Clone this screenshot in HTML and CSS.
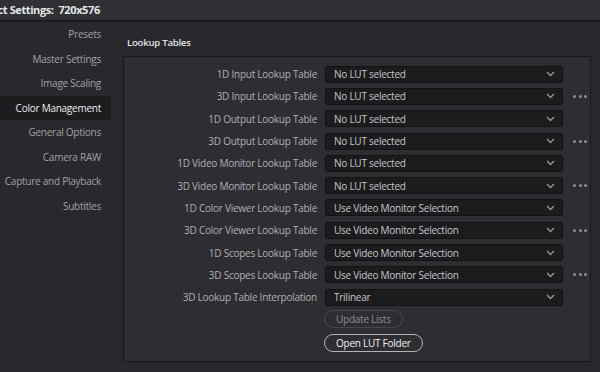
FILE: index.html
```html
<!DOCTYPE html>
<html lang="en">
<head>
  <meta charset="UTF-8">
  <title>Project Settings</title>
  <link rel="stylesheet" href="styles.css">
</head>
<body>
  <div class="titlebar"><span class="title">Project Settings:&nbsp; 720x576</span></div>

  <div class="layout">
    <ul class="sidebar">
      <li>Presets</li>
      <li>Master Settings</li>
      <li>Image Scaling</li>
      <li class="active">Color Management</li>
      <li>General Options</li>
      <li>Camera RAW</li>
      <li>Capture and Playback</li>
      <li>Subtitles</li>
    </ul>

    <div class="main">
      <h2>Lookup Tables</h2>
      <div class="panel">
        <div class="grid" id="lutGrid"></div>
        <div class="buttons">
          <button class="pill disabled">Update Lists</button>
          <button class="pill">Open LUT Folder</button>
        </div>
      </div>
    </div>
  </div>

  <script>
    const rows = [
      ["1D Input Lookup Table", "No LUT selected", false],
      ["3D Input Lookup Table", "No LUT selected", true],
      ["1D Output Lookup Table", "No LUT selected", false],
      ["3D Output Lookup Table", "No LUT selected", true],
      ["1D Video Monitor Lookup Table", "No LUT selected", false],
      ["3D Video Monitor Lookup Table", "No LUT selected", true],
      ["1D Color Viewer Lookup Table", "Use Video Monitor Selection", false],
      ["3D Color Viewer Lookup Table", "Use Video Monitor Selection", true],
      ["1D Scopes Lookup Table", "Use Video Monitor Selection", false],
      ["3D Scopes Lookup Table", "Use Video Monitor Selection", true],
      ["3D Lookup Table Interpolation", "Trilinear", false]
    ];

    const chevron = '<svg width="9" height="6" viewBox="0 0 9 6"><polyline points="1,1 4.5,4.5 8,1" fill="none" stroke="#9a9a9e" stroke-width="1.3"/></svg>';
    const grid = document.getElementById('lutGrid');

    rows.forEach(function (r) {
      const label = document.createElement('div');
      label.className = 'label';
      label.textContent = r[0];

      const select = document.createElement('div');
      select.className = 'select';
      select.innerHTML = '<span>' + r[1] + '</span>' + chevron;

      const more = document.createElement('div');
      more.className = 'more';
      if (r[2]) more.innerHTML = '<i></i><i></i><i></i>';

      grid.appendChild(label);
      grid.appendChild(select);
      grid.appendChild(more);
    });
  </script>
</body>
</html>
```

FILE: styles.css
```css
body {
  margin: 0;
  background: #28282d;
  font-family: 'Open Sans', 'Noto Sans', sans-serif;
  font-size: 10px;
  letter-spacing: -0.25px;
  color: #b4b4b8;
  overflow: hidden;
}

.titlebar {
  height: 20px;
  background: #303035;
  border-bottom: 2px solid #1a1a1d;
  overflow: hidden;
  white-space: nowrap;
}

.title {
  display: inline-block;
  margin-left: -29px;
  line-height: 20px;
  font-size: 11px;
  letter-spacing: -0.4px;
  font-weight: 700;
  color: #e6e6e8;
}

.layout {
  display: flex;
}

.sidebar {
  list-style: none;
  margin: 0;
  padding: 0;
  width: 123px;
  flex: none;
}

.sidebar li {
  height: 24.5px;
  line-height: 24.5px;
  margin-right: 12px;
  padding-right: 10px;
  text-align: right;
  white-space: nowrap;
  color: #a2a2a6;
}

.sidebar li.active {
  background: #1d1d20;
  color: #ececee;
}

.main {
  flex: 1;
}

.main h2 {
  margin: 0;
  height: 34px;
  line-height: 42px;
  padding-left: 4px;
  font-size: 9.6px;
  font-weight: 600;
  color: #e2e2e4;
}

.panel {
  width: 468px;
  height: 306px;
  background: #2d2d32;
  border: 1px solid #18181b;
  padding-top: 6px;
  box-sizing: border-box;
}

.grid {
  display: grid;
  grid-template-columns: 193px 238px 26px;
  grid-auto-rows: 22.3px;
  column-gap: 8px;
  align-items: center;
}

.label {
  text-align: right;
  color: #b0b0b4;
  white-space: nowrap;
}

.select {
  height: 17px;
  box-sizing: border-box;
  background: #1c1c1f;
  border: 1px solid #131315;
  border-radius: 2px;
  display: flex;
  align-items: center;
  justify-content: space-between;
  padding: 0 7px 0 8px;
  color: #c6c6c9;
}

.more {
  display: flex;
  gap: 2.5px;
  padding-left: 2px;
}

.more i {
  width: 3px;
  height: 3px;
  border-radius: 50%;
  background: #8e8e93;
}

.buttons {
  display: flex;
  flex-direction: column;
  align-items: flex-start;
  gap: 6px;
  margin: 2px 0 0 200px;
}

.pill {
  height: 18px;
  padding: 0 11px;
  border-radius: 9px;
  background: transparent;
  border: 1px solid #b4b4b6;
  color: #f0f0f2;
  font-family: inherit;
  font-size: 10px;
  letter-spacing: -0.25px;
  line-height: 16px;
}

.pill.disabled {
  border-color: #46464c;
  color: #8e8e94;
}
```
